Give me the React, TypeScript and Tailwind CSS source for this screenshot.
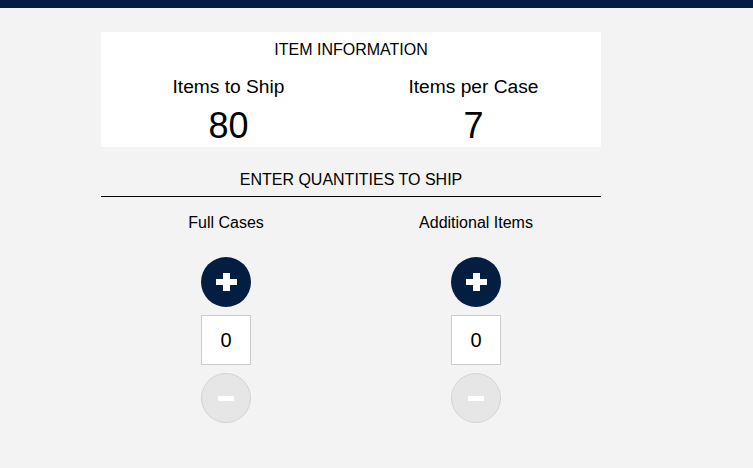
import React, { useState } from "react";

function PlusIcon() {
  return (
    <svg width="21" height="18" viewBox="0 0 21 18" aria-hidden="true">
      <rect x="0" y="6" width="21" height="6" fill="#ffffff" />
      <rect x="7" y="0" width="7" height="18" fill="#ffffff" />
    </svg>
  );
}

function MinusIcon() {
  return (
    <svg width="16" height="5" viewBox="0 0 16 5" aria-hidden="true">
      <rect x="0" y="0" width="16" height="5" fill="#ffffff" />
    </svg>
  );
}

function Stepper({ label }: { label: string }) {
  const [value, setValue] = useState(0);
  return (
    <div className="flex flex-col items-center">
      <div className="text-[16px] leading-[18px] text-black">{label}</div>
      <button
        type="button"
        onClick={() => setValue(value + 1)}
        className="mt-[25px] flex h-[50px] w-[50px] items-center justify-center rounded-full bg-[#041e42]"
      >
        <PlusIcon />
      </button>
      <div className="mt-[8px] flex h-[50px] w-[50px] items-center justify-center border border-[#cccccc] bg-white text-[20px] text-black">
        {value}
      </div>
      <button
        type="button"
        onClick={() => setValue(Math.max(0, value - 1))}
        className="mt-[8px] flex h-[50px] w-[50px] items-center justify-center rounded-full border border-[#d4d4d4] bg-[#e6e6e6]"
      >
        <MinusIcon />
      </button>
    </div>
  );
}

export default function App() {
  return (
    <div
      className="min-h-[468px] bg-[#f3f3f3] text-black"
      style={{ fontFamily: '"Liberation Sans", Arial, sans-serif' }}
    >
      <div className="h-[8px] bg-[#041e42]" />
      <div className="ml-[101px] w-[500px] pt-[24px]">
        <div className="h-[115px] bg-white pt-[9px]">
          <div className="text-center text-[16px] leading-[18px]">ITEM INFORMATION</div>
          <div className="mt-[17px] grid grid-cols-2">
            <div className="flex flex-col items-center pl-[5px]">
              <div className="text-[19.2px] leading-[22px]">Items to Ship</div>
              <div className="mt-[8px] text-[36px] leading-[40px]">80</div>
            </div>
            <div className="flex flex-col items-center pr-[5px]">
              <div className="text-[19.2px] leading-[22px]">Items per Case</div>
              <div className="mt-[8px] text-[36px] leading-[40px]">7</div>
            </div>
          </div>
        </div>
        <div className="mt-[24px] border-b border-black pb-[7px] text-center text-[16px] leading-[18px]">
          ENTER QUANTITIES TO SHIP
        </div>
        <div className="mt-[17px] grid grid-cols-2">
          <Stepper label="Full Cases" />
          <Stepper label="Additional Items" />
        </div>
      </div>
    </div>
  );
}
